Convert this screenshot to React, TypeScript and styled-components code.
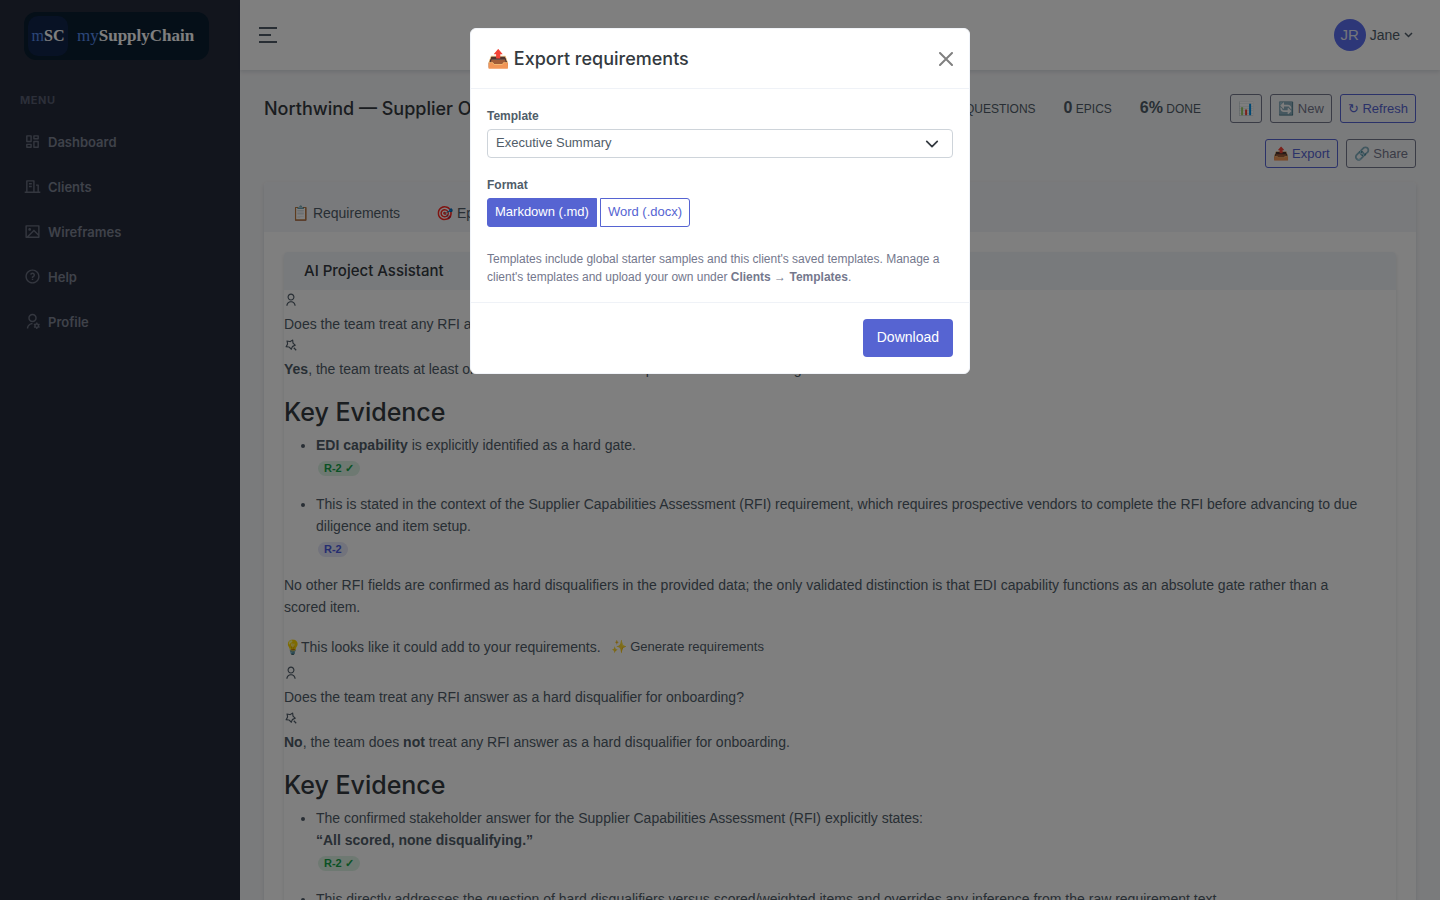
import React, { useState } from "react";
import styled, { createGlobalStyle } from "styled-components";
import {
  RiDashboardLine,
  RiBuildingLine,
  RiImageLine,
  RiQuestionLine,
  RiUserSettingsLine,
  RiUserLine,
  RiMagicLine,
} from "react-icons/ri";

const bodyFont = '"Liberation Sans", Arial, sans-serif';
const headFont = 'Inter, "Liberation Sans", sans-serif';

const GlobalStyle = createGlobalStyle`
  *, *::before, *::after { box-sizing: border-box; }
  body {
    margin: 0;
    height: 100vh;
    overflow: hidden;
    background: #f5f6f8;
    color: #505d69;
    font-family: ${bodyFont};
    font-size: 14px;
    line-height: 22px;
  }
  button, select, input { font-family: inherit; }
  h1, h2, h3, p, ul { margin: 0; }
`;

const Shell = styled.div`
  display: flex;
  align-items: stretch;
  min-height: 100vh;
`;

const Sidebar = styled.aside`
  flex: 0 0 240px;
  background: #252b3b;
`;

const Brand = styled.a`
  display: flex;
  align-items: center;
  gap: 9px;
  width: 185px;
  height: 48px;
  margin: 12px 0 0 24px;
  padding: 4px;
  border-radius: 12px;
  background: #0a1e30;
  color: #fff;
  font-family: "Liberation Serif", "Times New Roman", serif;
  font-weight: 700;
  font-size: 17px;
  text-decoration: none;
`;

const BrandMark = styled.span`
  display: flex;
  align-items: center;
  justify-content: center;
  width: 40px;
  height: 40px;
  border-radius: 10px;
  background: #10244a;
  font-size: 16px;
`;

const BrandLight = styled.span`
  color: #5a8ff0;
  font-weight: 400;
`;

const MenuTitle = styled.div`
  padding: 29px 20px 8px;
  color: #585e72;
  font-family: ${headFont};
  font-size: 11px;
  font-weight: 700;
  letter-spacing: 0.05em;
`;

const MenuItem = styled.a`
  display: flex;
  align-items: center;
  gap: 7px;
  height: 45px;
  padding: 0 24px;
  color: #7e8494;
  font-family: ${headFont};
  font-size: 13px;
  font-weight: 600;
  text-decoration: none;

  svg {
    width: 17px;
    height: 17px;
    color: #686e7f;
  }
`;

const Main = styled.div`
  flex: 1;
  min-width: 0;
`;

const TopBar = styled.header`
  display: flex;
  align-items: center;
  justify-content: space-between;
  height: 70px;
  padding: 0 27px 0 19px;
  background: #fff;
  box-shadow: 0 2px 4px rgba(15, 34, 58, 0.12);
`;

const PlainButton = styled.button`
  display: inline-flex;
  align-items: center;
  gap: 4px;
  padding: 0;
  border: 0;
  background: none;
  color: inherit;
  font-size: 14px;
  line-height: 22px;
  cursor: pointer;
`;

const Avatar = styled.span`
  display: flex;
  align-items: center;
  justify-content: center;
  width: 32px;
  height: 32px;
  border-radius: 50%;
  background: #5b6ff0;
  color: #e8eaf6;
  font-size: 15px;
`;

const Page = styled.main`
  padding: 24px;
`;

const PageHead = styled.div`
  display: flex;
  align-items: flex-start;
  gap: 27px;
  margin-bottom: 14px;
`;

const PageTitle = styled.h1`
  flex: 1;
  min-width: 0;
  overflow: hidden;
  white-space: nowrap;
  color: #343a40;
  font-family: ${headFont};
  font-size: 18px;
  font-weight: 500;
  line-height: 30px;
`;

const Stats = styled.div`
  display: flex;
  gap: 28px;
  line-height: 28px;
`;

const Stat = styled.span`
  font-size: 12px;
  text-transform: uppercase;

  b {
    font-size: 16px;
  }
`;

const Actions = styled.div`
  display: flex;
  flex-wrap: wrap;
  justify-content: flex-end;
  gap: 16px 8px;
  width: 188px;
`;

const OutlineButton = styled.button<{ $primary?: boolean }>`
  height: 29px;
  padding: 0 7px;
  border: 1px solid ${(p) => (p.$primary ? "#5664d2" : "#74788d")};
  border-radius: 3px;
  background: none;
  color: ${(p) => (p.$primary ? "#5664d2" : "#74788d")};
  font-size: 13px;
  line-height: 20px;
  white-space: nowrap;
  cursor: pointer;
`;

const Card = styled.section`
  border-radius: 4px;
  background: #fff;
  box-shadow: 0 2px 4px rgba(15, 34, 58, 0.12);
`;

const Tabs = styled.nav`
  display: flex;
  align-items: flex-end;
  height: 50px;
  padding: 0 10px;
  border-radius: 4px 4px 0 0;
  background: #f3f5f8;
`;

const Tab = styled.a`
  padding: 8px 18px;
  color: inherit;
  text-decoration: none;
`;

const CardBody = styled.div`
  padding: 20px;
`;

const ChatTitle = styled.h2`
  padding: 8px 20px;
  border-radius: 4px 4px 0 0;
  background: #f1f4f9;
  color: #343a40;
  font-family: ${headFont};
  font-size: 15px;
  font-weight: 500;
  line-height: 22px;
`;

const ChatIcon = styled.div`
  display: flex;
  align-items: center;
  height: 23px;
  padding-bottom: 3px;

  svg {
    width: 14px;
    height: 14px;
  }
`;

const Answer = styled.div`
  h3 {
    margin: 16px 0 6px;
    color: #343a40;
    font-family: ${headFont};
    font-size: 25px;
    font-weight: 500;
    line-height: 32px;
  }

  ul {
    padding-left: 32px;
  }

  li {
    margin-bottom: 13px;
  }
`;

const Paragraph = styled.p`
  padding-right: 30px;
`;

const BadgeLine = styled.div`
  display: flex;
  align-items: center;
  height: 24px;
  padding-left: 2px;
`;

const Badge = styled.a<{ $ok?: boolean }>`
  padding: 0 6px;
  border-radius: 8px;
  background: ${(p) => (p.$ok ? "#dcf3e4" : "#e4e6f8")};
  color: ${(p) => (p.$ok ? "#16a34a" : "#4a5be0")};
  font-size: 11px;
  font-weight: 700;
  line-height: 15px;
  text-decoration: none;
`;

const Suggestion = styled.div`
  display: flex;
  align-items: center;
  gap: 10px;
  padding: 18px 0 5px;

  button {
    font-size: 13px;
  }
`;

const Backdrop = styled.div`
  position: fixed;
  inset: 0;
  display: flex;
  align-items: flex-start;
  justify-content: center;
  padding: 28px 16px;
  background: rgba(0, 0, 0, 0.5);
`;

const Dialog = styled.div`
  width: 100%;
  max-width: 500px;
  border: 1px solid #f1f4f9;
  border-radius: 6px;
  background: #fff;
`;

const DialogHead = styled.div`
  display: flex;
  align-items: center;
  justify-content: space-between;
  height: 60px;
  padding: 0 16px;
  border-bottom: 1px solid #eff2f7;
`;

const DialogTitle = styled.h2`
  color: #343a40;
  font-family: ${headFont};
  font-size: 18px;
  font-weight: 500;
  line-height: 24px;
`;

const CloseButton = styled(PlainButton)`
  color: #808080;
`;

const DialogBody = styled.div`
  padding: 16px;
`;

const FieldLabel = styled.label`
  display: block;
  margin-bottom: 2px;
  padding: 0;
  font-size: 12px;
  font-weight: 700;
  line-height: 22px;
`;

const SelectWrap = styled.div`
  display: grid;
  align-items: center;
  margin-bottom: 16px;

  > * {
    grid-area: 1 / 1;
  }

  svg {
    justify-self: end;
    margin-right: 14px;
    pointer-events: none;
  }
`;

const Select = styled.select`
  appearance: none;
  width: 100%;
  height: 29px;
  padding: 0 8px 2px;
  border: 1px solid #ced4da;
  border-radius: 4px;
  background: #fff;
  color: #505d69;
  font-size: 13px;
`;

const FormatGroup = styled.fieldset`
  min-width: 0;
  margin: 0 0 23px;
  padding: 0;
  border: 0;
`;

const FormatOptions = styled.div`
  display: flex;
  gap: 3px;
`;

const FormatOption = styled.label<{ $side: "left" | "right" }>`
  height: 29px;
  padding: 0 7px;
  border: 1px solid #5664d2;
  border-radius: ${(p) => (p.$side === "left" ? "3px 0 0 3px" : "0 3px 3px 0")};
  color: #5664d2;
  font-size: 13px;
  line-height: 26px;
  cursor: pointer;

  input {
    position: absolute;
    opacity: 0;
    pointer-events: none;
  }

  &:has(input:checked) {
    background: #5664d2;
    color: #fff;
  }
`;

const Hint = styled.p`
  color: #74788d;
  font-size: 12px;
  line-height: 18px;
`;

const DialogFoot = styled.div`
  display: flex;
  justify-content: flex-end;
  padding: 16px;
  border-top: 1px solid #eff2f7;
`;

const PrimaryButton = styled.button`
  height: 38px;
  padding: 0 14px 2px;
  border: 0;
  border-radius: 4px;
  background: #5664d2;
  color: #fff;
  font-size: 14px;
  cursor: pointer;
`;

const menu = [
  { label: "Dashboard", Icon: RiDashboardLine },
  { label: "Clients", Icon: RiBuildingLine },
  { label: "Wireframes", Icon: RiImageLine },
  { label: "Help", Icon: RiQuestionLine },
  { label: "Profile", Icon: RiUserSettingsLine },
];

const stats = [
  { value: "16", label: "Questions" },
  { value: "0", label: "Epics" },
  { value: "6%", label: "Done" },
];

function Question() {
  return (
    <>
      <ChatIcon><RiUserLine /></ChatIcon>
      <p>Does the team treat any RFI answer as a hard disqualifier for onboarding?</p>
      <ChatIcon><RiMagicLine /></ChatIcon>
    </>
  );
}

function ExportDialog() {
  const [format, setFormat] = useState("md");
  return (
    <Backdrop>
      <Dialog role="dialog" aria-modal="true" aria-labelledby="export-title">
        <DialogHead>
          <DialogTitle id="export-title">📤 Export requirements</DialogTitle>
          <CloseButton aria-label="Close">
            <svg width="14" height="14" viewBox="0 0 14 14" fill="none" stroke="currentColor" strokeWidth="2" strokeLinecap="round">
              <path d="M1 1l12 12M13 1L1 13" />
            </svg>
          </CloseButton>
        </DialogHead>
        <DialogBody>
          <FieldLabel htmlFor="template">Template</FieldLabel>
          <SelectWrap>
            <Select id="template" defaultValue="Executive Summary">
              <option>Executive Summary</option>
            </Select>
            <svg width="14" height="14" viewBox="0 0 16 16" fill="none" stroke="#343a40" strokeWidth="2" strokeLinecap="round" strokeLinejoin="round">
              <path d="M2 5l6 6 6-6" />
            </svg>
          </SelectWrap>
          <FormatGroup>
            <FieldLabel as="legend">Format</FieldLabel>
            <FormatOptions>
              <FormatOption $side="left">
                <input type="radio" name="format" checked={format === "md"} onChange={() => setFormat("md")} />
                Markdown (.md)
              </FormatOption>
              <FormatOption $side="right">
                <input type="radio" name="format" checked={format === "docx"} onChange={() => setFormat("docx")} />
                Word (.docx)
              </FormatOption>
            </FormatOptions>
          </FormatGroup>
          <Hint>
            Templates include global starter samples and this client's saved templates. Manage a
            client's templates and upload your own under <b>Clients → Templates</b>.
          </Hint>
        </DialogBody>
        <DialogFoot>
          <PrimaryButton>Download</PrimaryButton>
        </DialogFoot>
      </Dialog>
    </Backdrop>
  );
}

export default function App() {
  return (
    <>
      <GlobalStyle />
      <Shell>
        <Sidebar>
          <Brand href="#">
            <BrandMark><span><BrandLight>m</BrandLight>SC</span></BrandMark>
            <span><BrandLight>my</BrandLight>SupplyChain</span>
          </Brand>
          <MenuTitle>MENU</MenuTitle>
          <nav>
            {menu.map(({ label, Icon }) => (
              <MenuItem href="#" key={label}><Icon />{label}</MenuItem>
            ))}
          </nav>
        </Sidebar>
        <Main>
          <TopBar>
            <PlainButton aria-label="Toggle menu">
              <svg width="18" height="16" viewBox="0 0 18 16" fill="none" stroke="currentColor" strokeWidth="2">
                <path d="M0 1h18M0 8h12M0 15h18" />
              </svg>
            </PlainButton>
            <PlainButton>
              <Avatar>JR</Avatar>
              Jane
              <svg width="9" height="6" viewBox="0 0 9 6" fill="none" stroke="currentColor" strokeWidth="1.5">
                <path d="M1 1l3.500 3.500 3.500-3.500" />
              </svg>
            </PlainButton>
          </TopBar>
          <Page>
            <PageHead>
              <PageTitle>Northwind — Supplier Onboarding</PageTitle>
              <Stats>
                {stats.map((s) => (
                  <Stat key={s.label}><b>{s.value}</b> {s.label}</Stat>
                ))}
              </Stats>
              <Actions>
                <OutlineButton aria-label="Statistics">📊</OutlineButton>
                <OutlineButton>🔄 New</OutlineButton>
                <OutlineButton $primary>↻ Refresh</OutlineButton>
                <OutlineButton $primary>📤 Export</OutlineButton>
                <OutlineButton>🔗 Share</OutlineButton>
              </Actions>
            </PageHead>
            <Card>
              <Tabs>
                <Tab href="#">📋 Requirements</Tab>
                <Tab href="#">🎯 Epics</Tab>
              </Tabs>
              <CardBody>
                <Card>
                  <ChatTitle>AI Project Assistant</ChatTitle>
                  <Question />
                  <Answer>
                    <p><b>Yes</b>, the team treats at least one RFI answer as a hard stop concern for onboarding.</p>
                    <h3>Key Evidence</h3>
                    <ul>
                      <li>
                        <b>EDI capability</b> is explicitly identified as a hard gate.
                        <BadgeLine><Badge href="#" $ok>R-2 ✓</Badge></BadgeLine>
                      </li>
                      <li>
                        This is stated in the context of the Supplier Capabilities Assessment (RFI) requirement, which
                        requires prospective vendors to complete the RFI before advancing to due diligence and item
                        setup.
                        <BadgeLine><Badge href="#">R-2</Badge></BadgeLine>
                      </li>
                    </ul>
                    <Paragraph>
                      No other RFI fields are confirmed as hard disqualifiers in the provided data; the only validated
                      distinction is that EDI capability functions as an absolute gate rather than a scored item.
                    </Paragraph>
                  </Answer>
                  <Suggestion>
                    <span>💡This looks like it could add to your requirements.</span>
                    <PlainButton>✨ Generate requirements</PlainButton>
                  </Suggestion>
                  <Question />
                  <Answer>
                    <p><b>No</b>, the team does <b>not</b> treat any RFI answer as a hard disqualifier for onboarding.</p>
                    <h3>Key Evidence</h3>
                    <ul>
                      <li>
                        The confirmed stakeholder answer for the Supplier Capabilities Assessment (RFI) explicitly
                        states:
                        <br />
                        <b>“All scored, none disqualifying.”</b>
                        <BadgeLine><Badge href="#" $ok>R-2 ✓</Badge></BadgeLine>
                      </li>
                      <li>
                        This directly addresses the question of hard disqualifiers versus scored/weighted items and
                        overrides any inference from the raw requirement text.
                      </li>
                    </ul>
                  </Answer>
                </Card>
              </CardBody>
            </Card>
          </Page>
        </Main>
      </Shell>
      <ExportDialog />
    </>
  );
}
